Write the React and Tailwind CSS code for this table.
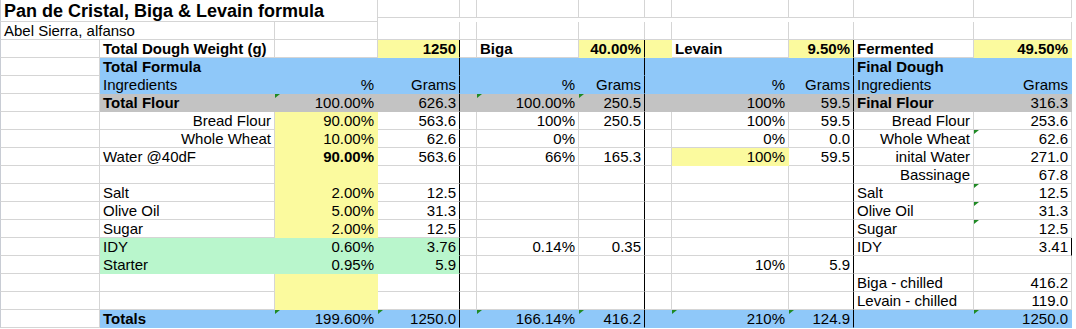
import React from 'react'

const COLS = ['A', 'B', 'C', 'D', 'E', 'F', 'G', 'H', 'I', 'J', 'K', 'L']

const fills = {
  w: { bg: 'bg-white', r: 'border-r-[#d5d5d5]', b: 'border-b-[#d5d5d5]' },
  y: { bg: 'bg-[#fbfa9e]', r: 'border-r-[#fbfa9e]', b: 'border-b-[#fbfa9e]' },
  b: { bg: 'bg-[#8fc8f9]', r: 'border-r-[#8fc8f9]', b: 'border-b-[#8fc8f9]' },
  s: { bg: 'bg-[#c3c3c3]', r: 'border-r-[#c3c3c3]', b: 'border-b-[#c3c3c3]' },
  g: { bg: 'bg-[#b9f6cc]', r: 'border-r-[#b9f6cc]', b: 'border-b-[#b9f6cc]' },
}

// build a sheet row from a sparse map of column -> cell
const row = (cells, fill = 'w', skip = []) =>
  COLS.filter((c) => !skip.includes(c)).map((c) => ({ col: c, f: fill, ...(cells[c] || {}) }))

const R = (t, extra = {}) => ({ t, r: true, ...extra })

const rows = [
  row({ A: { t: 'Pan de Cristal, Biga & Levain formula', b: true, span: 3, title: true } }, 'w', ['B', 'C']),
  row({ A: { t: 'Abel Sierra, alfanso', span: 2 } }, 'w', ['B']),
  row({
    B: { t: 'Total Dough Weight (g)', b: true },
    D: R('1250', { b: true, f: 'y' }),
    F: { t: 'Biga', b: true },
    G: R('40.00%', { b: true, f: 'y' }),
    H: { f: 'y' },
    I: { t: 'Levain', b: true },
    J: R('9.50%', { b: true, f: 'y' }),
    K: { t: 'Fermented', b: true },
    L: R('49.50%', { b: true, f: 'y' }),
  }),
  row({ A: { f: 'w' }, B: { t: 'Total Formula', b: true }, K: { t: 'Final Dough', b: true } }, 'b'),
  row({
    A: { f: 'w' },
    B: { t: 'Ingredients' },
    C: R('%'),
    D: R('Grams'),
    F: R('%'),
    G: R('Grams'),
    I: R('%'),
    J: R('Grams'),
    K: { t: 'Ingredients' },
    L: R('Grams'),
  }, 'b'),
  row({
    A: { f: 'w' },
    B: { t: 'Total Flour', b: true },
    C: R('100.00%', { tri: true }),
    D: R('626.3'),
    F: R('100.00%', { tri: true }),
    G: R('250.5', { tri: true }),
    I: R('100%'),
    J: R('59.5'),
    K: { t: 'Final Flour', b: true },
    L: R('316.3'),
  }, 's'),
  row({
    B: R('Bread Flour'),
    C: R('90.00%', { f: 'y' }),
    D: R('563.6'),
    F: R('100%'),
    G: R('250.5'),
    I: R('100%'),
    J: R('59.5'),
    K: R('Bread Flour'),
    L: R('253.6'),
  }),
  row({
    B: R('Whole Wheat'),
    C: R('10.00%', { f: 'y' }),
    D: R('62.6'),
    F: R('0%'),
    I: R('0%'),
    J: R('0.0'),
    K: R('Whole Wheat'),
    L: R('62.6', { tri: true }),
  }),
  row({
    B: { t: 'Water @40dF' },
    C: R('90.00%', { f: 'y', b: true }),
    D: R('563.6'),
    F: R('66%'),
    G: R('165.3'),
    I: R('100%', { f: 'y' }),
    J: R('59.5'),
    K: R('inital Water'),
    L: R('271.0'),
  }),
  row({ C: { f: 'y' }, K: R('Bassinage'), L: R('67.8') }),
  row({ B: { t: 'Salt' }, C: R('2.00%', { f: 'y' }), D: R('12.5'), K: { t: 'Salt' }, L: R('12.5', { tri: true }) }),
  row({ B: { t: 'Olive Oil' }, C: R('5.00%', { f: 'y' }), D: R('31.3'), K: { t: 'Olive Oil' }, L: R('31.3', { tri: true }) }),
  row({ B: { t: 'Sugar' }, C: R('2.00%', { f: 'y' }), D: R('12.5'), K: { t: 'Sugar' }, L: R('12.5', { tri: true }) }),
  row({
    B: { t: 'IDY', f: 'g' },
    C: R('0.60%', { f: 'g' }),
    D: R('3.76', { f: 'g' }),
    F: R('0.14%'),
    G: R('0.35'),
    K: { t: 'IDY' },
    L: R('3.41', { blk: true }),
  }),
  row({
    B: { t: 'Starter', f: 'g' },
    C: R('0.95%', { f: 'g' }),
    D: R('5.9', { f: 'g' }),
    I: R('10%'),
    J: R('5.9'),
  }),
  row({ C: { f: 'y' }, K: { t: 'Biga - chilled' }, L: R('416.2') }),
  row({ C: { f: 'y' }, K: { t: 'Levain - chilled' }, L: R('119.0') }),
  row({
    A: { f: 'w' },
    B: { t: 'Totals', b: true },
    C: R('199.60%', { tri: true }),
    D: R('1250.0', { tri: true }),
    F: R('166.14%', { tri: true }),
    G: R('416.2', { tri: true }),
    I: R('210%', { tri: true }),
    J: R('124.9', { tri: true }),
    L: R('1250.0', { tri: true }),
  }, 'b'),
]

function Cell({ c, ri }) {
  const fill = fills[c.f]
  const black = (ri >= 2 && ['D', 'G', 'J'].includes(c.col)) || c.blk
  const right = black ? 'border-r-black' : fill.r
  const span = c.span === 3 ? 'col-span-3' : c.span === 2 ? 'col-span-2' : ''
  return (
    <div
      className={`relative border-r border-b whitespace-nowrap px-[3px] ${fill.bg} ${right} ${fill.b} ${span} ${
        c.col === 'A' ? 'border-l border-l-[#c8ccd4]' : ''
      } ${c.title ? 'h-[22px] text-[18px] leading-[22px]' : 'h-[18px] leading-[18px]'} ${
        c.r ? 'text-right' : 'text-left'
      } ${c.b ? 'font-bold' : ''}`}
    >
      {c.tri && (
        <svg className="absolute left-0 top-0" width="5" height="5" viewBox="0 0 5 5">
          <polygon points="0,0 5,0 0,4" fill="#1f8a24" />
        </svg>
      )}
      {c.t}
    </div>
  )
}

export default function App() {
  return (
    <div className="w-[1076px] h-[329px] overflow-hidden bg-white text-black text-[15px] font-['Liberation_Sans',Arial,sans-serif]">
      <div className="grid grid-cols-[100px_175px_103px_82px_17px_102px_66px_27px_117px_65px_120px_98px_4px]">
        {rows.map((r, ri) => (
          <React.Fragment key={ri}>
            {r.map((c) => (
              <Cell key={c.col} c={c} ri={ri} />
            ))}
            <div className={ri === 0 ? 'h-[22px]' : 'h-[18px]'} />
          </React.Fragment>
        ))}
      </div>
    </div>
  )
}
